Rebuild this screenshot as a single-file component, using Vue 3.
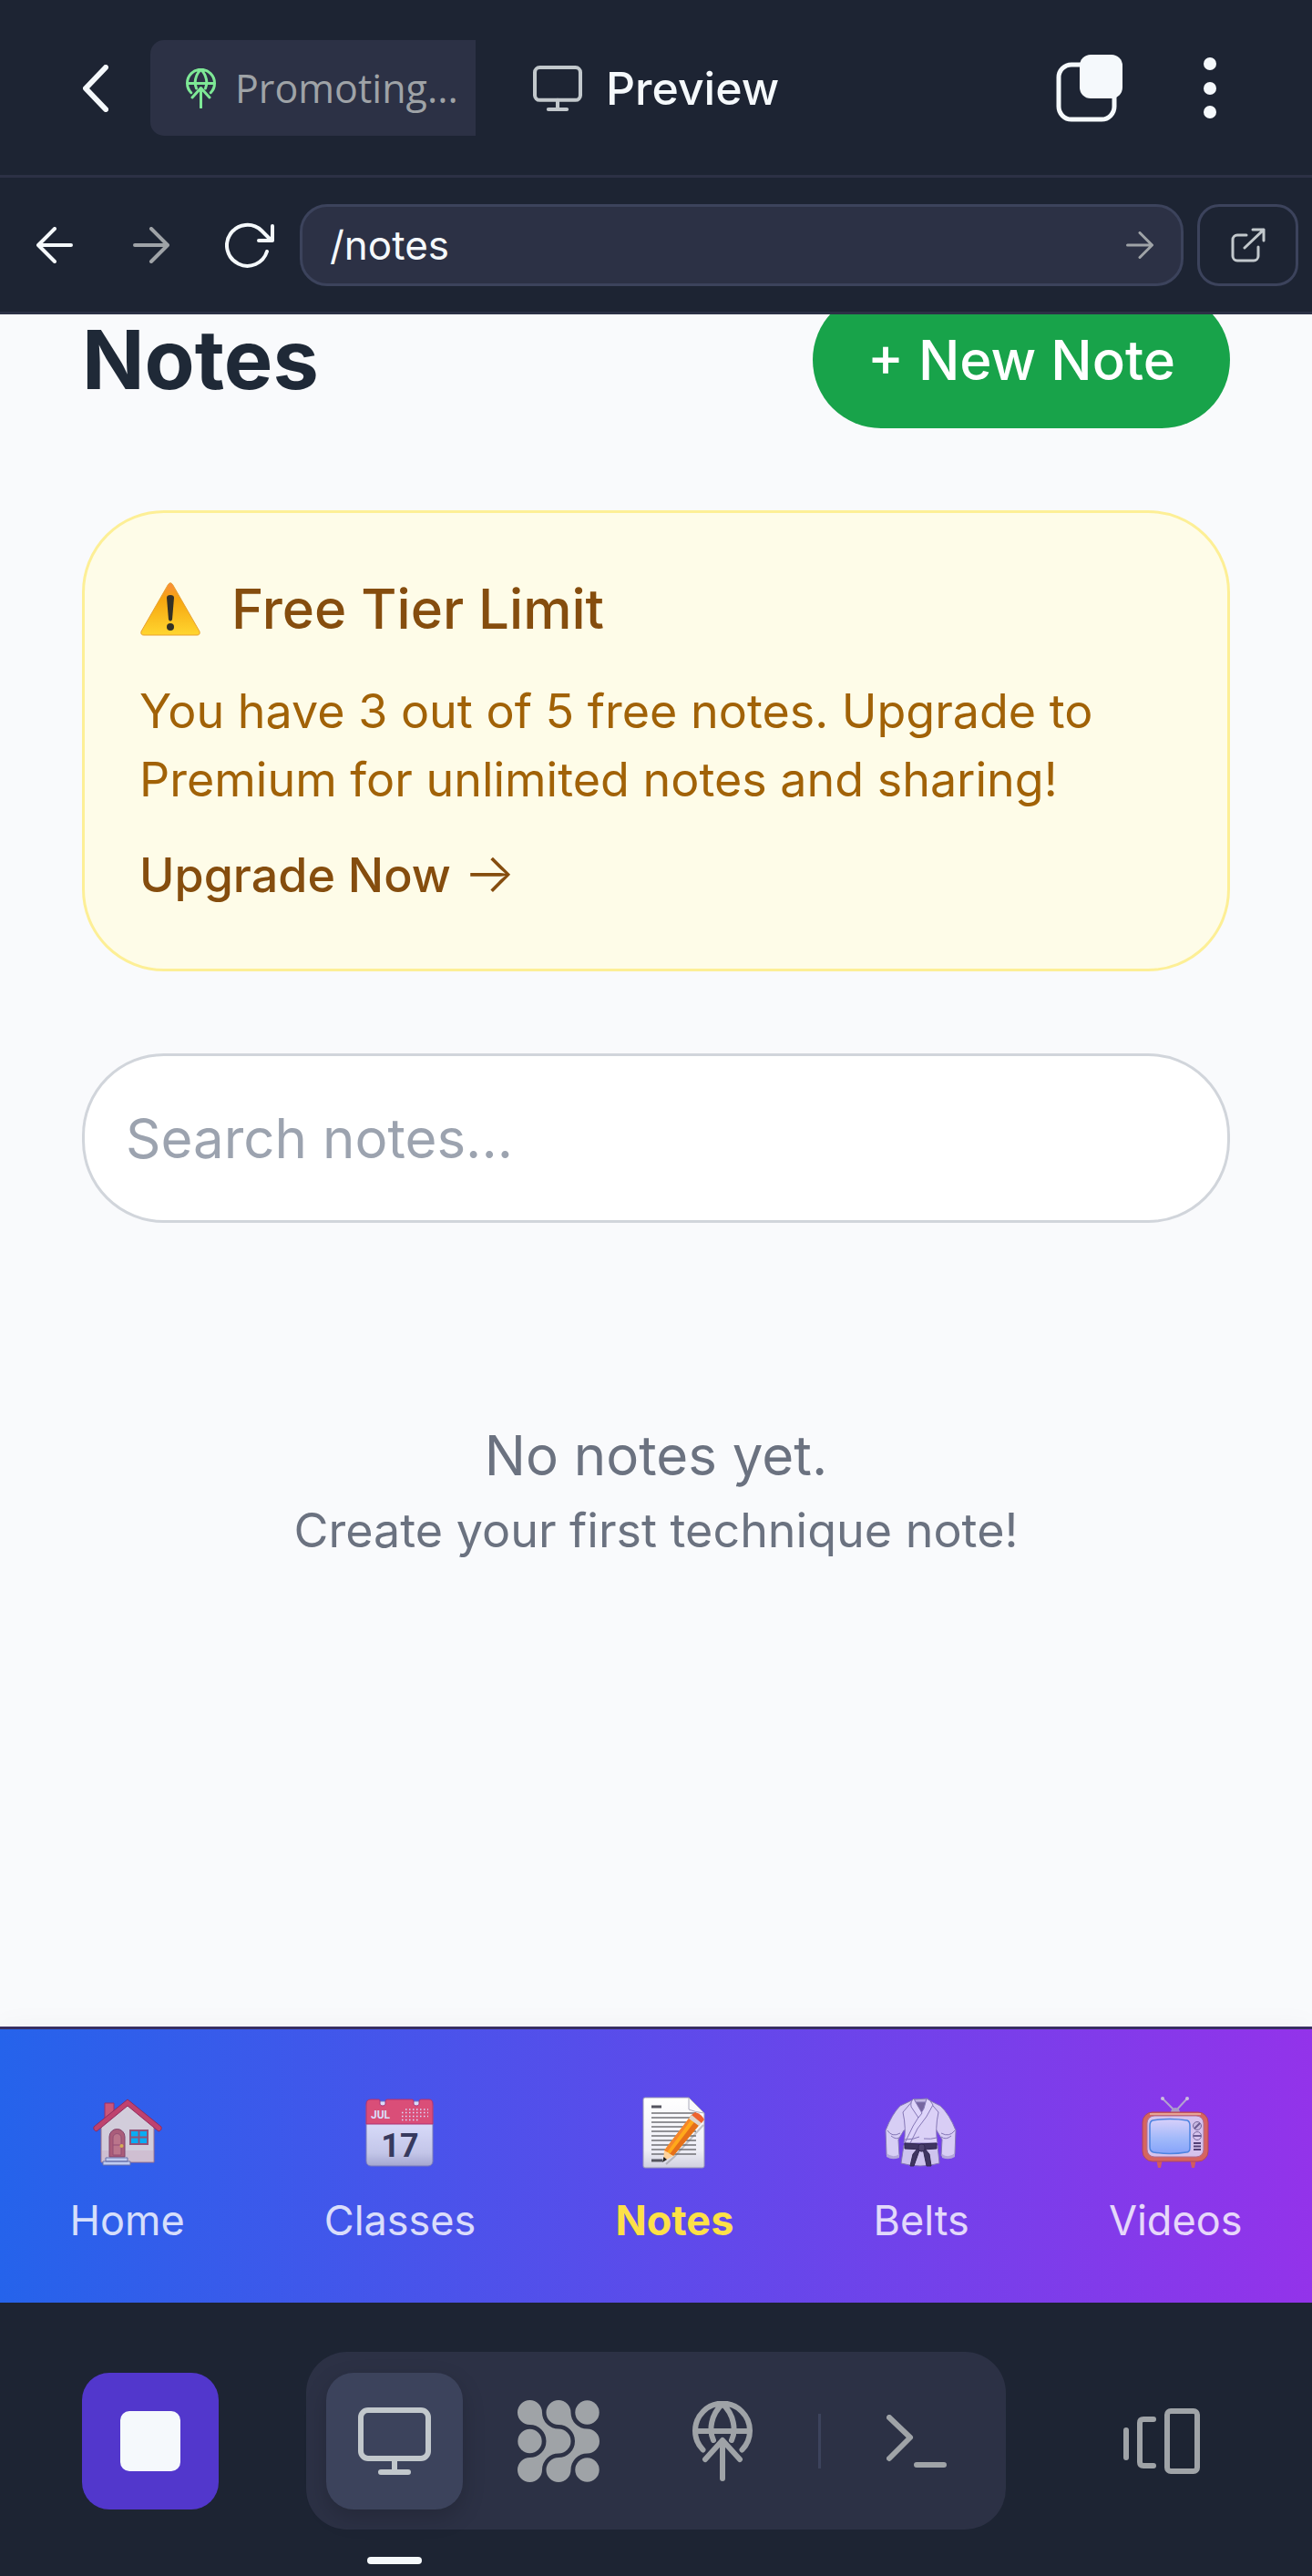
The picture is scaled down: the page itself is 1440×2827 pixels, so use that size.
<script setup>
import { ref } from 'vue'

const path = ref('/notes')
const query = ref('')
const links = [
  { id: 'home', label: 'Home' },
  { id: 'classes', label: 'Classes' },
  { id: 'notes', label: 'Notes', active: true },
  { id: 'belts', label: 'Belts' },
  { id: 'videos', label: 'Videos' }
]
const rows = [21, 26, 31, 36, 41, 46, 51, 56, 61, 66]
</script>

<template>
  <div class="screen">
    <header class="tabs">
      <button class="back" aria-label="Back">
        <svg width="28" height="52" viewBox="0 0 28 52" class="line w6"><path d="M25 3 3 26l22 23" /></svg>
      </button>
      <button class="tab">
        <svg width="33" height="44" viewBox="0 0 66 88" class="line w6 green">
          <path d="M11.500 53.500A30 30 0 1 1 54.500 53.500M3 33H63M33 3C20 15 18 32 23 44M33 3C46 15 48 32 43 44M33 86V44M14 64 33 43 52 64" />
        </svg>
        <span>Promoting...</span>
      </button>
      <div class="current">
        <svg width="54" height="50" viewBox="0 0 80 74" class="line w6 silver">
          <rect x="3" y="3" width="74" height="53" rx="8" /><path d="M40 56V70M25 71H55" />
        </svg>
        <span>Preview</span>
      </div>
      <div class="actions">
        <button aria-label="Tabs">
          <svg width="74" height="74" viewBox="0 0 74 74" class="line w5">
            <rect x="3" y="11" width="61" height="60" rx="14" />
            <rect x="26" y="0" width="47" height="48" rx="12" class="solid" />
          </svg>
        </button>
        <button aria-label="Menu">
          <svg width="14" height="68" viewBox="0 0 14 68" class="solid">
            <circle cx="7" cy="7" r="7" /><circle cx="7" cy="34" r="7" /><circle cx="7" cy="60" r="7" />
          </svg>
        </button>
      </div>
    </header>

    <div class="address">
      <div class="history">
        <button aria-label="Go back">
          <svg width="40" height="40" viewBox="0 0 40 40" class="line w4"><path d="M38 20H3M20 2 2 20l18 18" /></svg>
        </button>
        <button aria-label="Go forward">
          <svg width="40" height="40" viewBox="0 0 40 40" class="line w4 gray"><path d="M2 20H37M20 2 38 20 20 38" /></svg>
        </button>
        <button aria-label="Reload">
          <svg width="54" height="50" viewBox="0 0 54 50" class="line w4">
            <path d="M46 32A22.500 22.500 0 1 1 40 9L51 20M52 4V20H37" />
          </svg>
        </button>
      </div>
      <form class="field" @submit.prevent>
        <input v-model="path" type="text" aria-label="Path">
        <button aria-label="Go">
          <svg width="30" height="30" viewBox="0 0 40 40" class="line w4 gray"><path d="M2 20H37M20 2 38 20 20 38" /></svg>
        </button>
      </form>
      <button class="open" aria-label="Open in new window">
        <svg width="38" height="38" viewBox="0 0 38 38" class="line w3 silver">
          <path d="M17 8H7a5 5 0 0 0-5 5V31a5 5 0 0 0 5 5H25a5 5 0 0 0 5-5V21M15 22 36 2M24 2H36V14" />
        </svg>
      </button>
    </div>

    <main class="content">
      <div class="title-row">
        <h1>Notes</h1>
        <button class="new-note">+ New Note</button>
      </div>

      <section class="notice">
        <h2>
          <svg width="68" height="60" viewBox="0 0 68 60">
            <defs>
              <linearGradient id="warn" x1="0" y1="0" x2="0" y2="1">
                <stop offset="0" stop-color="#f98d3c" /><stop offset=".3" stop-color="#f6a50f" /><stop offset="1" stop-color="#ffd52f" />
              </linearGradient>
            </defs>
            <path d="M31.500 3.500Q34 0 36.500 3.500L66 55Q67 59 63 59H5Q1 59 2 55Z" fill="url(#warn)" stroke="#e8a030" />
            <path d="M30 18Q30 15 34 15T38 18L36 42Q34 45 32 42Z" fill="#333026" /><circle cx="34" cy="50" r="4" fill="#333026" />
          </svg>
          Free Tier Limit
        </h2>
        <p>You have 3 out of 5 free notes. Upgrade to Premium for unlimited notes and sharing!</p>
        <a href="#upgrade">Upgrade Now <span class="arrow">→</span></a>
      </section>

      <input v-model="query" class="search" type="search" placeholder="Search notes..." aria-label="Search notes">

      <div class="empty">
        <p class="lead">No notes yet.</p>
        <p>Create your first technique note!</p>
      </div>
    </main>

    <nav class="sections">
      <a v-for="link in links" :key="link.id" :href="'#' + link.id" :class="{ active: link.active }">
        <svg v-if="link.id === 'home'" width="84" height="84" viewBox="0 0 84 84">
          <path d="M17 10H27V28H17Z" fill="#f0555f" stroke="#b92445" />
          <path d="M13 33 42 10 71 33V75H13Z" fill="#fbe9d8" stroke="#b57272" />
          <path d="M14 62H70V74H14Z" fill="#f3c7c0" opacity=".5" />
          <path d="M42 6 5 36Q4 40 8 41L42 13 76 41Q80 40 79 36Z" fill="#e33c50" stroke="#a91f3c" />
          <path d="M22 69V47a8.500 8.500 0 0 1 17 0V69Z" fill="#c95d5f" stroke="#963c4b" />
          <path d="M26 67V48a4.500 4.500 0 0 1 9 0V67ZM26 56H35" fill="#de7b74" stroke="#ac4b56" />
          <circle cx="35.500" cy="57" r="2" fill="#ffc42e" />
          <path d="M45 40H64V55H45Z" fill="#00c0f5" stroke="#a8515c" stroke-width="2" /><path d="M54.500 40V55M45 47.500H64" stroke="#a8515c" stroke-width="2" />
          <path d="M18 70H42V74H18ZM15 74H45V78H15Z" fill="#e4e8f3" stroke="#77769d" />
        </svg>
        <svg v-else-if="link.id === 'classes'" width="84" height="84" viewBox="0 0 84 84">
          <defs><linearGradient id="cal" x1="0" y1="0" x2="0" y2="1"><stop offset=".3" stop-color="#fff" /><stop offset=".8" stop-color="#e2e2e8" /><stop offset="1" stop-color="#bcbcca" /></linearGradient></defs>
          <rect x="5" y="8" width="73" height="71" rx="5" fill="url(#cal)" stroke="#8585af" />
          <path d="M5 33V11Q5 6 10 6H19Q20 6 20 8V11Q20 13 23 13T26 11V8Q26 6 28 6H55Q57 6 57 8V11Q57 13 60 13T63 11V8Q63 6 65 6H74Q78 6 78 11V33Z" fill="#ff4d5c" stroke="#c62b59" />
          <text x="10" y="27" class="month">JUL</text>
          <path d="M48 17H73M44 20.500H73M44 24.500H73M44 28.500H64" stroke="#fff" stroke-width="1.500" stroke-dasharray="1.500 2.500" />
          <text x="42" y="69" text-anchor="middle" class="day">17</text>
        </svg>
        <svg v-else-if="link.id === 'notes'" width="84" height="84" viewBox="0 0 84 84">
          <defs><linearGradient id="sheet" x1="0" y1="0" x2="0" y2="1"><stop offset="0" stop-color="#fff" /><stop offset=".75" stop-color="#eeeef6" /><stop offset="1" stop-color="#d0d0df" /></linearGradient></defs>
          <path d="M10 4H58L75 21V79Q75 81 73 81H10Q8 81 8 79V6Q8 4 10 4Z" fill="url(#sheet)" stroke="#9997b5" />
          <path v-for="y in rows" :key="y" :d="'M17 ' + y + 'H66'" stroke="#707076" stroke-width="1.400" />
          <path d="M17 14H28M17 73H29" stroke="#55555f" stroke-width="3" />
          <path d="M58 4V17Q65 20 75 21Z" fill="#f8f8fb" stroke="#aaaaba" />
          <path d="M33 77 42 69 74 34" stroke="#666" stroke-width="2" opacity=".35" fill="none" />
          <path d="M31 62 61 23 72 31 41 68Z" fill="#ffa91b" />
          <path d="M37 66 67 27 72 31 41 68Z" fill="#e56f19" /><path d="M31 62 61 23 63 25 34 64Z" fill="#f5852b" />
          <path d="M31 62 41 68 30 74Z" fill="#ffd39b" /><path d="M30.500 69 34 72 29 75Z" fill="#222" />
          <path d="M58 27 62 22 73 30 69 35Z" fill="#ddd5ce" /><path d="M61 23 65 20Q72 22 75 28L72 32Z" fill="#ee632f" />
        </svg>
        <svg v-else-if="link.id === 'belts'" width="84" height="84" viewBox="0 0 84 84" stroke="#8985a9" stroke-linejoin="round">
          <path d="M34 6 19 13Q10 22 3 40L4 67Q11 72 18 68L17 50 23 40H59L65 50 64 68Q72 72 79 66L80 40Q73 22 63 13L49 6Z" fill="#f1f1f8" />
          <path d="M23 56 20 76Q41 82 62 76L60 56Z" fill="#e5e4ef" />
          <path d="M22 20Q26 38 23 54H60Q57 38 61 20L49 6H34Z" fill="#f6f6fb" />
          <path d="M35 7H48L42 24Z" fill="#77708e" /><path d="M34 6 49 5 48 9H35Z" fill="#d7d5e2" />
          <path d="M48 5Q52 6 55 12 49 25 38 38L30 54H24Q32 35 45 16Z" fill="#fafaff" />
          <path d="M34 5Q30 8 31 14L39 26 43 21 36 9Z" fill="#fafaff" />
          <path d="M5 40Q10 48 19 43M79 40Q73 48 64 43M9 46Q15 51 19 47M75 46Q69 51 64 47M24 50Q34 50 40 47M45 49Q53 50 59 48" fill="none" />
          <path d="M4 65Q11 71 18 66V70Q10 73 4 69ZM79 65Q72 71 65 66V70Q73 73 79 69Z" fill="#c3bfd6" stroke="none" />
          <path d="M24 54 40 55 59 54V60L44 61 24 60Z" fill="#33333f" stroke="#22222d" />
          <path d="M38 60 33 66 30 79 34 79 40 62ZM44 60 48 79 53 79 51 66 46 60Z" fill="#33333f" stroke="#22222d" />
          <rect x="39" y="55" width="7" height="8" rx="3" fill="#44434f" stroke="#22222d" />
        </svg>
        <svg v-else width="84" height="84" viewBox="0 0 84 84">
          <defs><linearGradient id="tube" x1="0" y1="0" x2="0" y2="1"><stop offset="0" stop-color="#ecf6ff" /><stop offset=".6" stop-color="#a5d8ff" /><stop offset="1" stop-color="#86beff" /></linearGradient></defs>
          <path d="M28 5 42 19 55 5" fill="none" stroke="#bdbdc9" stroke-width="2" /><circle cx="28" cy="5" r="2" fill="#ddd" /><circle cx="55" cy="5" r="2" fill="#ddd" />
          <path d="M37 21Q37 15 42 15T47 21Z" fill="#b2b2c2" />
          <path d="M21 71H28L26 81H23ZM58 71H65L63 81H60Z" fill="#e36540" />
          <rect x="6" y="20" width="72" height="54" rx="11" fill="#e9703e" stroke="#bd4d38" /><path d="M14 22H70" stroke="#ffc180" stroke-width="2" />
          <rect x="11" y="24" width="62" height="45" rx="8" fill="#e9e7ef" stroke="#ba7d80" />
          <path d="M17 29Q36 26 55 29 58 30 58 35V59Q58 64 54 64 36 67 18 64 14 63 14 58V35Q14 30 17 29Z" fill="url(#tube)" stroke="#3f97df" stroke-width="1.500" />
          <circle cx="66" cy="35" r="4.500" fill="#d7d7df" stroke="#74748b" /><path d="M63 38 69 32M62 46H70" stroke="#65657d" stroke-width="2" />
          <circle cx="66" cy="46" r="4.500" fill="none" stroke="#74748b" /><path d="M62 54H70M62 57.500H70M62 61H70" stroke="#454258" stroke-width="2" />
        </svg>
        <span>{{ link.label }}</span>
      </a>
    </nav>

    <footer class="dock">
      <button class="stop" aria-label="Stop"><i></i></button>
      <div class="tools">
        <button class="selected" aria-label="Preview">
          <svg width="80" height="74" viewBox="0 0 80 74" class="line w6 silver">
            <rect x="3" y="3" width="74" height="53" rx="8" /><path d="M40 56V70M25 71H55" />
          </svg>
        </button>
        <button aria-label="Agent">
          <svg width="90" height="90" viewBox="0 0 90 90" fill="#9fa3a7">
            <path d="M13.500 0A13.500 13.500 0 0 1 27 13.500A18 18 0 0 0 45 31.500A13.500 13.500 0 0 1 45 58.500A18 18 0 0 0 27 76.500A13.500 13.500 0 1 1 13.500 63A18 18 0 0 0 13.500 27A13.500 13.500 0 0 1 13.500 0Z" />
            <path d="M45 0A13.500 13.500 0 0 1 58.500 13.500A18 18 0 0 0 76.500 31.500A13.500 13.500 0 0 1 76.500 58.500A18 18 0 0 0 58.500 76.500A13.500 13.500 0 1 1 45 63A18 18 0 0 0 45 27A13.500 13.500 0 0 1 45 0Z" />
            <circle cx="13.500" cy="45" r="13.200" /><circle cx="76.500" cy="13.500" r="13.200" /><circle cx="76.500" cy="76.500" r="13.200" />
          </svg>
        </button>
        <button aria-label="Publish">
          <svg width="66" height="88" viewBox="0 0 66 88" class="line w6 gray">
            <path d="M11.500 53.500A30 30 0 1 1 54.500 53.500M3 33H63M33 3C20 15 18 32 23 43M33 3C46 15 48 32 43 43M33 85V44M14 64 33 43 52 64" />
          </svg>
        </button>
        <span class="divider"></span>
        <button aria-label="Terminal">
          <svg width="66" height="58" viewBox="0 0 66 58" class="line w6 gray"><path d="M3 3 26 25 3 48M33 55H63" /></svg>
        </button>
      </div>
      <button class="windows" aria-label="Windows">
        <svg width="84" height="72" viewBox="0 0 84 72" class="line w6 gray">
          <path d="M3 24V54M33 12H22Q18 12 18 16V59Q18 63 22 63H33" /><rect x="48" y="3" width="33" height="66" rx="4" />
        </svg>
      </button>
    </footer>
  </div>
</template>

<style>
body { margin: 0; background: #1d2433; }
</style>

<style scoped>
* { box-sizing: border-box; }
.screen { display: flex; flex-direction: column; min-height: 100vh; background: #1d2433; font-family: Inter, sans-serif; }
svg { display: block; flex: none; }
button { display: flex; align-items: center; justify-content: center; margin: 0; padding: 0; border: 0; background: none; font: inherit; }
h1, h2, p { margin: 0; }

.line { fill: none; stroke: #f5f9fc; stroke-linecap: round; stroke-linejoin: round; }
.solid { fill: #f5f9fc; stroke: none; }
.w3 { stroke-width: 3px; }
.w4 { stroke-width: 4px; }
.w5 { stroke-width: 5px; }
.w6 { stroke-width: 6px; }
.green { stroke: #7ee896; }
.silver { stroke: #c2c8cc; }
.gray { stroke: #9fa3a7; }

.tabs { display: flex; align-items: center; padding: 44px 73px 43px 45px; border-bottom: 3px solid #2c3145; }
.back { width: 120px; height: 105px; }
.tab { justify-content: flex-start; gap: 21px; width: 357px; height: 105px; padding-left: 39px; border-radius: 15px 0 0 15px; background: #2c3145; color: #9fa3a7; font: 43px "Open Sans", sans-serif; }
.current { display: flex; flex: 1; align-items: center; gap: 26px; padding-left: 63px; color: #f5f9fc; font-size: 50px; font-weight: 500; }
.actions { display: flex; gap: 56px; }
.actions button { height: 105px; min-width: 74px; }
.actions button:last-child { min-width: 78px; }

.address { display: flex; align-items: center; gap: 15px; padding: 29px 15px 28px 22px; border-bottom: 3px solid #2c3145; }
.history { display: flex; gap: 30px; }
.history button { width: 76px; height: 90px; }
.history button:last-child { width: 80px; }
.field { display: flex; flex: 1; align-items: center; height: 90px; padding: 0 30px; border: 3px solid #3c435c; border-radius: 30px; background: #2c3145; }
.field input { flex: 1; min-width: 0; padding: 0; border: 0; outline: 0; background: none; color: #f5f9fc; font: 44px Inter, sans-serif; }
.open { width: 111px; height: 90px; border: 3px solid #3c435c; border-radius: 24px; }

.content { flex: 1; overflow: hidden; padding: 0 90px; background: #f9fafc; }
.title-row { display: flex; align-items: center; justify-content: space-between; margin-top: -25px; }
h1 { color: #1f2937; font-size: 90px; font-weight: 700; line-height: 90px; }
.new-note { height: 150px; padding: 0 60px; border-radius: 75px; background: #18a34a; color: #fff; font-size: 60px; font-weight: 500; }
.notice { margin-top: 90px; padding: 60px 60px 65px; border: 3px solid #fdef96; border-radius: 90px; background: #fefce8; color: #a16207; font-size: 52px; line-height: 75px; }
.notice h2 { display: flex; align-items: center; gap: 33px; color: #854d0e; font-size: 60px; font-weight: 500; line-height: 90px; }
.notice p { margin: 30px 0; }
.notice a { display: block; color: #854d0e; font-weight: 500; text-decoration: none; }
.arrow { font-size: 60px; font-weight: 300; line-height: 1; }
.search { display: block; width: 100%; height: 186px; margin-top: 90px; padding: 0 45px; border: 3px solid #d1d5db; border-radius: 90px; outline: 0; background: #fff; color: #1f2937; font: 60px Inter, sans-serif; appearance: none; }
.search::placeholder { color: #9ca3af; opacity: 1; }
.empty { padding: 210px 0; color: #6b7280; font-size: 52px; line-height: 75px; text-align: center; }
.empty .lead { font-size: 60px; line-height: 90px; }

.sections { display: flex; justify-content: space-around; padding: 71px 0 60px; border-top: 3px solid #382f62; background: linear-gradient(90deg, #2563eb, #9333ea) padding-box; box-shadow: 0 0 30px rgb(0 0 0 / 4%); }
.sections a { display: flex; flex-direction: column; align-items: center; gap: 25px; color: #fff; font-size: 45px; line-height: 60px; text-decoration: none; opacity: .8; }
.sections .active { color: #fde047; font-weight: 700; opacity: 1; }
.month { fill: #fff; font: 700 12px Roboto, sans-serif; }
.day { fill: #34343c; font: 700 36px Roboto, sans-serif; }

.dock { display: flex; justify-content: space-between; align-items: center; padding: 54px 90px 51px; background: #1d2433; }
.stop { width: 150px; height: 150px; border-radius: 30px; background: #5237cc; }
.stop i { width: 66px; height: 66px; border-radius: 10px; background: #f5f9fc; }
.tools { display: flex; align-items: center; gap: 30px; height: 195px; padding: 0 23px 0 22px; border-radius: 45px; background: #2c3145; }
.tools button { position: relative; width: 150px; height: 150px; border-radius: 30px; }
.tools .selected { background: #3c435c; box-shadow: 0 9px 24px rgb(0 0 0 / 18%); }
.selected::after { content: ""; position: absolute; top: 202px; width: 60px; height: 8px; border-radius: 4px; background: #f5f9fc; }
.divider { width: 3px; height: 60px; background: #3c435c; }
.windows { width: 150px; height: 150px; }
</style>
